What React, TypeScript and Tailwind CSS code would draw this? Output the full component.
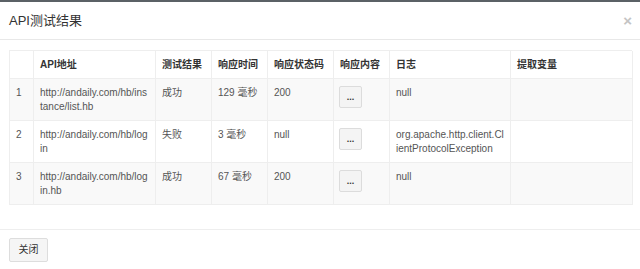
import { type ReactNode } from 'react'

type Row = {
  no: string
  url: string
  result: string
  time: string
  status: string
  log: string
}

const rows: Row[] = [
  { no: '1', url: 'http://andaily.com/hb/instance/list.hb', result: '成功', time: '129 毫秒', status: '200', log: 'null' },
  { no: '2', url: 'http://andaily.com/hb/login', result: '失败', time: '3 毫秒', status: 'null', log: 'org.apache.http.client.ClientProtocolException' },
  { no: '3', url: 'http://andaily.com/hb/login.hb', result: '成功', time: '67 毫秒', status: '200', log: 'null' },
]

const headers = ['', 'API地址', '测试结果', '响应时间', '响应状态码', '响应内容', '日志', '提取变量']

function Cell({ children, bold }: { children?: ReactNode; bold?: boolean }) {
  return (
    <div
      className={`border-r border-b border-[#eeeeee] pl-[6px] pr-[5px] pt-[7px] pb-[6px] leading-[14px] break-all ${
        bold ? 'font-bold text-[#333]' : 'text-[#555]'
      }`}
    >
      {children}
    </div>
  )
}

export default function App() {
  return (
    <div
      className="w-[640px] h-[269px] bg-white flex flex-col overflow-hidden text-[10px]"
      style={{ fontFamily: '"Liberation Sans", Arial, "Noto Sans CJK SC", sans-serif' }}
    >
      <div className="h-[2px] bg-[#5b6166]" />

      {/* Header */}
      <div className="h-[38px] border-b border-[#e8e8e8] flex items-center justify-between pl-[9px] pr-[8px]">
        <h4 className="text-[13px] text-[#333] leading-none">API测试结果</h4>
        <span className="text-[15px] font-bold text-[#c4c4c4] leading-none">×</span>
      </div>

      {/* Body */}
      <div className="pt-[10px] pl-[9px] pr-[8px] pb-[24px]">
        <div className="grid grid-cols-[24px_122px_56px_56px_66px_56px_121px_122px] border-l border-t border-[#eeeeee]">
          {headers.map((h, i) => (
            <Cell key={i} bold>
              {h}
            </Cell>
          ))}
          {rows.map((r, idx) => {
            const bg = idx % 2 === 0 ? 'bg-[#f9f9f9]' : 'bg-white'
            return (
              <div key={r.no} className="contents">
                {[r.no, r.url, r.result, r.time, r.status].map((v, i) => (
                  <div
                    key={i}
                    className={`${bg} border-r border-b border-[#eeeeee] pl-[6px] ${
                      i === 1 ? 'pr-[7px]' : 'pr-[5px]'
                    } pt-[7px] pb-[6px] leading-[14px] break-all text-[#555]`}
                  >
                    {v}
                  </div>
                ))}
                <div className={`${bg} border-r border-b border-[#eeeeee] pl-[5px] pt-[7px]`}>
                  <button className="w-[23px] h-[22px] border border-[#dcdcdc] rounded-[2px] bg-[#f4f4f4] text-[#333] text-[9px] font-bold leading-none flex items-center justify-center">
                    ...
                  </button>
                </div>
                <div className={`${bg} border-r border-b border-[#eeeeee] pl-[6px] pr-[5px] pt-[7px] pb-[6px] leading-[14px] break-all text-[#555]`}>
                  {r.log}
                </div>
                <div className={`${bg} border-r border-b border-[#eeeeee]`} />
              </div>
            )
          })}
        </div>
      </div>

      {/* Footer */}
      <div className="border-t border-[#eeeeee] pt-[8px] pl-[9px]">
        <button className="w-[39px] h-[24px] border border-[#dddddd] rounded-[2px] bg-[#f5f5f5] text-[#333] text-[10px] leading-none">
          关闭
        </button>
      </div>
    </div>
  )
}
